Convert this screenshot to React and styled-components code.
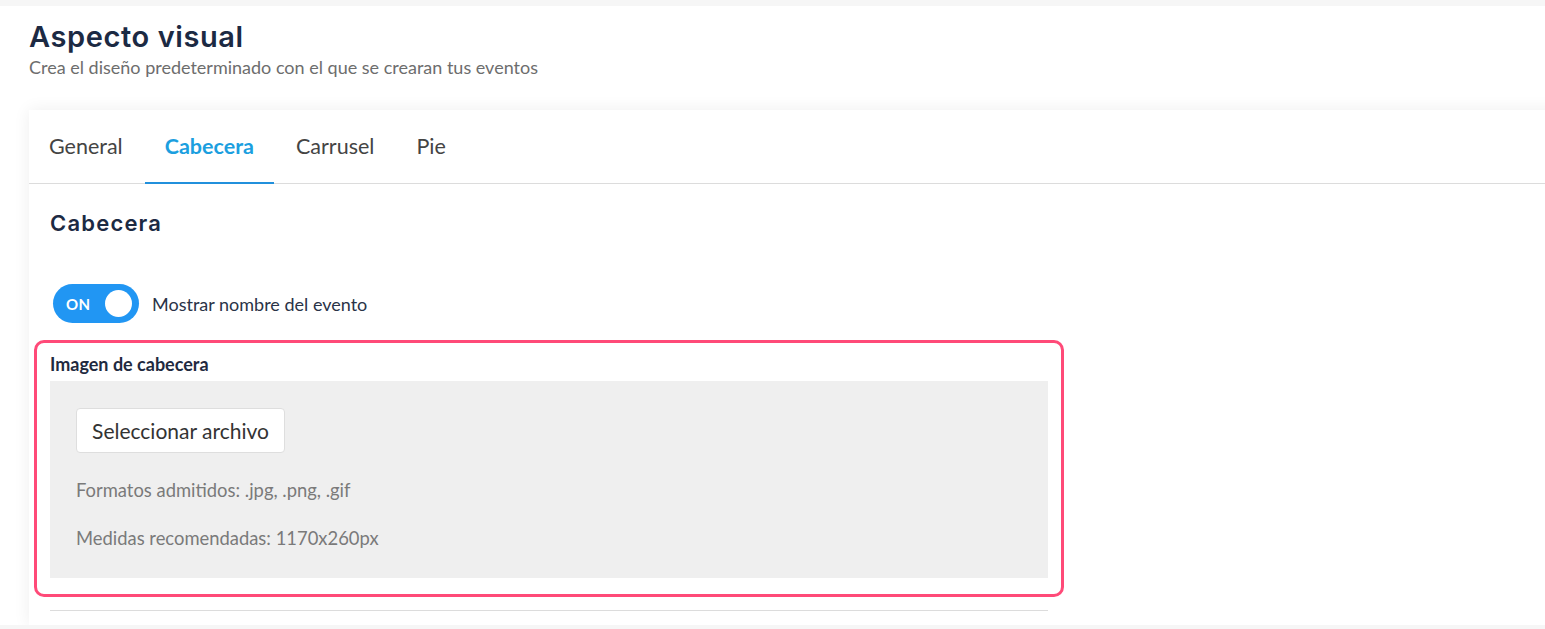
import React, { useState } from "react";
import styled, { createGlobalStyle } from "styled-components";

const GlobalStyle = createGlobalStyle`
  html, body { margin: 0; padding: 0; overflow: hidden; }
  body {
    background: #f6f6f6;
    font-family: "Lato", "Liberation Sans", sans-serif;
    color: #333;
  }
  * { box-sizing: border-box; }
`;

const Page = styled.div`
  margin-top: 6px;
  background: #fff;
  padding: 15px 0 0 29px;
`;

const Title = styled.h1`
  margin: 0;
  font-family: "Inter", "Noto Sans", sans-serif;
  font-weight: 600;
  font-size: 29px;
  line-height: 32px;
  color: #1c2a43;
  letter-spacing: 0.6px;
`;

const Subtitle = styled.p`
  margin: 3px 0 0;
  font-size: 18px;
  line-height: 22px;
  color: #6d6d6d;
`;

const Card = styled.section`
  margin-top: 32px;
  margin-right: -40px;
  background: #fff;
  box-shadow: 0 0 16px rgba(0, 0, 0, 0.07);
  padding-bottom: 14px;
`;

const Tabs = styled.nav`
  display: flex;
  gap: 2px;
  height: 74px;
  border-bottom: 1px solid #dcdcdc;
`;

const Tab = styled.button`
  appearance: none;
  border: none;
  background: none;
  padding: 0 20px;
  margin-bottom: -1px;
  font-family: "Lato", sans-serif;
  font-size: 21.5px;
  color: ${(p) => (p.$active ? "#1c9fdf" : "#444")};
  font-weight: ${(p) => (p.$active ? 700 : 400)};
  border-bottom: 2px solid ${(p) => (p.$active ? "#2190dc" : "transparent")};
  cursor: pointer;
`;

const Body = styled.div`
  padding: 0 21px;
  width: 1040px;
`;

const Column = styled.div`
  width: 998px;
  display: flex;
  flex-direction: column;
`;

const SectionTitle = styled.h2`
  margin: 26px 0 0;
  font-family: "Inter", "Noto Sans", sans-serif;
  font-weight: 600;
  font-size: 22px;
  line-height: 26px;
  letter-spacing: 1.2px;
  color: #1c2a43;
`;

const ToggleRow = styled.label`
  display: flex;
  align-items: center;
  gap: 13px;
  margin: 48px 0 0 3px;
  font-size: 18px;
  color: #2a3347;
  cursor: pointer;
`;

const Switch = styled.span`
  position: relative;
  display: inline-flex;
  align-items: center;
  width: 86px;
  height: 39px;
  border-radius: 20px;
  background: ${(p) => (p.$on ? "#2196f3" : "#bbb")};
  padding-left: 13px;
  font-size: 15px;
  font-weight: 700;
  color: #fff;
  letter-spacing: 0.3px;
`;

const Knob = styled.span`
  position: absolute;
  top: 6px;
  left: ${(p) => (p.$on ? "52px" : "7px")};
  width: 27px;
  height: 27px;
  border-radius: 50%;
  background: #fff;
`;

const Highlight = styled.div`
  margin: 17px -16px 0;
  border: 3px solid #ff4a78;
  border-radius: 10px;
  padding: 10px 13px 16px;
`;

const FieldLabel = styled.div`
  font-size: 18px;
  line-height: 22px;
  font-weight: 700;
  color: #1f2a40;
  margin-bottom: 6px;
`;

const FileBox = styled.div`
  background: #efefef;
  padding: 27px 26px 29px;
  display: flex;
  flex-direction: column;
  align-items: flex-start;
`;

const FileButton = styled.button`
  appearance: none;
  height: 45px;
  width: 209px;
  background: #fff;
  border: 1px solid #dedede;
  border-radius: 4px;
  font-family: "Lato", sans-serif;
  font-size: 21px;
  color: #333;
  cursor: pointer;
`;

const Hint = styled.p`
  margin: ${(p) => p.$gap}px 0 0;
  font-size: 18.4px;
  line-height: 22px;
  color: #7a7a7a;
`;

const Divider = styled.hr`
  margin: 13px 0 0;
  border: none;
  border-top: 1px solid #dcdcdc;
  width: 998px;
`;

export default function App() {
  const [tab, setTab] = useState("Cabecera");
  const [on, setOn] = useState(true);
  return (
    <>
      <GlobalStyle />
      <Page>
        <Title>Aspecto visual</Title>
        <Subtitle>Crea el diseño predeterminado con el que se crearan tus eventos</Subtitle>
        <Card>
          <Tabs>
            {["General", "Cabecera", "Carrusel", "Pie"].map((t) => (
              <Tab key={t} $active={tab === t} onClick={() => setTab(t)}>
                {t}
              </Tab>
            ))}
          </Tabs>
          <Body>
            <Column>
              <SectionTitle>Cabecera</SectionTitle>
              <ToggleRow onClick={() => setOn(!on)}>
                <Switch $on={on}>
                  {on ? "ON" : ""}
                  <Knob $on={on} />
                </Switch>
                Mostrar nombre del evento
              </ToggleRow>
              <Highlight>
                <FieldLabel>Imagen de cabecera</FieldLabel>
                <FileBox>
                  <FileButton>Seleccionar archivo</FileButton>
                  <Hint $gap={26}>Formatos admitidos: .jpg, .png, .gif</Hint>
                  <Hint $gap={26}>Medidas recomendadas: 1170x260px</Hint>
                </FileBox>
              </Highlight>
              <Divider />
            </Column>
          </Body>
        </Card>
      </Page>
    </>
  );
}
